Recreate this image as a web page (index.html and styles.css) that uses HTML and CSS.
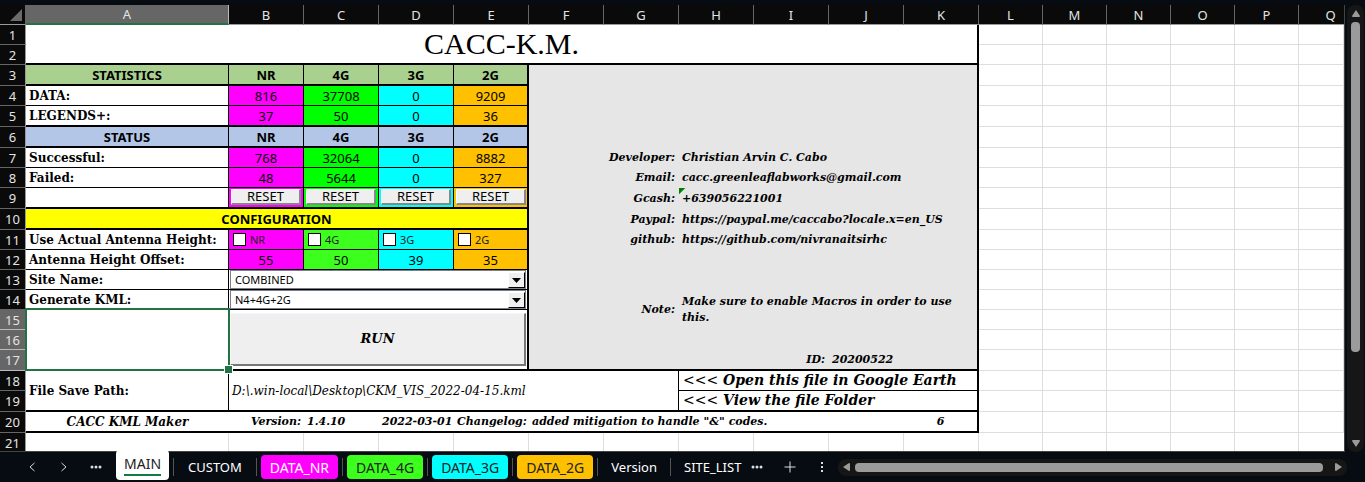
FILE: index.html
```html
<!DOCTYPE html>
<html lang="en">
<head>
<meta charset="utf-8">
<title>CACC KML Maker</title>
<link rel="stylesheet" href="styles.css">
</head>
<body>
<main class="workspace">
<div class="sheet">
<table class="grid">
<colgroup><col class="c-num"><col class="c-a"><col class="c-mid" span="10"><col class="c-std" span="5"><col></colgroup>
<thead>
<tr><th class="corner"><svg width="12" height="12" viewBox="0 0 12 12"><path d="M12 0V12H0Z" fill="#6b6b6b"/></svg></th><th class="active">A</th><th>B</th><th>C</th><th>D</th><th>E</th><th>F</th><th>G</th><th>H</th><th>I</th><th>J</th><th>K</th><th>L</th><th>M</th><th>N</th><th>O</th><th>P</th><th class="cut">Q</th></tr>
</thead>
<tbody>
<tr><th>1</th><td colspan="11" rowspan="2" class="title hb hr">CACC-K.M.</td><td><td><td><td><td><td></tr>
<tr><th>2</th><td><td><td><td><td><td></tr>
<tr class="tall head green"><th>3</th><td class="tr hb">STATISTICS</td><td class="tr hb">NR</td><td class="tr hb">4G</td><td class="tr hb">3G</td><td class="hr hb">2G</td><td colspan="6" rowspan="4" class="panel hr"></td><td><td><td><td><td><td></tr>
<tr class="nums"><th>4</th><td class="name tr tb">DATA:</td><td class="nr tr tb">816</td><td class="g4 tr tb">37708</td><td class="g3 tr tb">0</td><td class="g2 hr tb">9209</td><td><td><td><td><td><td></tr>
<tr class="tall nums"><th>5</th><td class="name tr hb">LEGENDS+:</td><td class="nr tr hb">37</td><td class="g4 tr hb">50</td><td class="g3 tr hb">0</td><td class="g2 hr hb">36</td><td><td><td><td><td><td></tr>
<tr class="tall head blue"><th>6</th><td class="tr hb">STATUS</td><td class="tr hb">NR</td><td class="tr hb">4G</td><td class="tr hb">3G</td><td class="hr hb">2G</td><td><td><td><td><td><td></tr>
<tr class="nums"><th>7</th><td class="name tr tb">Successful:</td><td class="nr tr tb">768</td><td class="g4 tr tb">32064</td><td class="g3 tr tb">0</td><td class="g2 hr tb">8882</td><td colspan="2" class="panel label">Developer:</td><td colspan="4" class="panel value hr">Christian Arvin C. Cabo</td><td><td><td><td><td><td></tr>
<tr class="nums"><th>8</th><td class="name tr tb">Failed:</td><td class="nr tr tb">48</td><td class="g4 tr tb">5644</td><td class="g3 tr tb">0</td><td class="g2 hr tb">327</td><td colspan="2" class="panel label">Email:</td><td colspan="4" class="panel value hr">cacc.greenleaflabworks@gmail.com</td><td><td><td><td><td><td></tr>
<tr class="tall"><th>9</th><td class="name tr hb"></td><td class="nr tr hb"><button class="reset">RESET</button></td><td class="g4 tr hb"><button class="reset">RESET</button></td><td class="g3 tr hb"><button class="reset">RESET</button></td><td class="g2 hr hb"><button class="reset">RESET</button></td><td colspan="2" class="panel label">Gcash:</td><td colspan="4" class="panel value flagged hr">+639056221001</td><td><td><td><td><td><td></tr>
<tr class="tall head yellow"><th>10</th><td colspan="5" class="hr hb">CONFIGURATION</td><td colspan="2" class="panel label">Paypal:</td><td colspan="4" class="panel value hr">https://paypal.me/caccabo?locale.x=en_US</td><td><td><td><td><td><td></tr>
<tr><th>11</th><td class="name tr tb">Use Actual Antenna Height:</td><td class="nr tr tb"><label class="check"><input type="checkbox">NR</label></td><td class="g4b tr tb"><label class="check"><input type="checkbox">4G</label></td><td class="g3 tr tb"><label class="check"><input type="checkbox">3G</label></td><td class="g2 hr tb"><label class="check"><input type="checkbox">2G</label></td><td colspan="2" class="panel label">github:</td><td colspan="4" class="panel value hr">https://github.com/nivranaitsirhc</td><td><td><td><td><td><td></tr>
<tr class="nums"><th>12</th><td class="name tr tb">Antenna Height Offset:</td><td class="nr tr tb">55</td><td class="g4b tr tb">50</td><td class="g3 tr tb">39</td><td class="g2 hr tb">35</td><td colspan="6" rowspan="2" class="panel hr"></td><td><td><td><td><td><td></tr>
<tr><th>13</th><td class="name tr tb"><label for="site">Site Name:</label></td><td colspan="4" class="hr tb"><div class="combo"><select id="site"><option>COMBINED</option></select><span class="drop"><svg width="9" height="5" viewBox="0 0 9 5"><path d="M0 0H9L4.500 5Z"/></svg></span></div></td><td><td><td><td><td><td></tr>
<tr><th>14</th><td class="name tr tb"><label for="kml">Generate KML:</label></td><td colspan="4" class="hr tb"><div class="combo"><select id="kml"><option>N4+4G+2G</option></select><span class="drop"><svg width="9" height="5" viewBox="0 0 9 5"><path d="M0 0H9L4.500 5Z"/></svg></span></div></td><td colspan="2" rowspan="2" class="panel label note">Note:</td><td colspan="4" rowspan="2" class="panel value note hr">Make sure to enable Macros in order to use this.</td><td><td><td><td><td><td></tr>
<tr class="picked"><th>15</th><td rowspan="3" class="selected tr hb"></td><td colspan="4" rowspan="3" class="hr hb"><button class="run">RUN</button></td><td><td><td><td><td><td></tr>
<tr class="picked"><th>16</th><td colspan="6" class="panel hr"></td><td><td><td><td><td><td></tr>
<tr class="tall picked"><th>17</th><td colspan="4" class="panel label id hb">ID:</td><td colspan="2" class="panel value id hr hb">20200522</td><td><td><td><td><td><td></tr>
<tr><th>18</th><td rowspan="2" class="name tr hb">File Save Path:</td><td colspan="6" rowspan="2" class="path tr hb">D:\.win-local\Desktop\CKM_VIS_2022-04-15.kml</td><td colspan="4" class="open hr tb"><a href="#earth"><span>&lt;&lt;&lt;</span> Open this file in Google Earth</a></td><td><td><td><td><td><td></tr>
<tr class="tall"><th>19</th><td colspan="4" class="open hr hb"><a href="#folder"><span>&lt;&lt;&lt;</span> View the file Folder</a></td><td><td><td><td><td><td></tr>
<tr class="tall foot"><th>20</th><td class="maker hb">CACC KML Maker</td><td class="right hb">Version:</td><td class="hb">1.4.10</td><td class="right hb">2022-03-01</td><td class="right hb">Changelog:</td><td colspan="5" class="hb">added mitigation to handle "&amp;" codes.</td><td class="mid hr hb">6</td><td><td><td><td><td><td></tr>
<tr><th>21</th><td><td><td><td><td><td><td><td><td><td><td><td><td><td><td><td></tr>
</tbody>
</table>
</div>
<div class="vbar"><svg width="10" height="7" viewBox="0 0 10 7"><path d="M5 0L9 6Q9 7 8 7H2Q1 7 1 6Z"/></svg><div class="vtrack"><div class="vthumb"></div></div><svg width="10" height="7" viewBox="0 0 10 7"><path d="M5 7L9 1Q9 0 8 0H2Q1 0 1 1Z"/></svg></div>
</main>
<nav class="tabs">
<div class="steps">
<button aria-label="Previous sheet"><svg width="8" height="10" viewBox="0 0 8 10"><path d="M6.500 1L2 5L6.500 9"/></svg></button>
<button aria-label="Next sheet"><svg width="8" height="10" viewBox="0 0 8 10"><path d="M1.500 1L6 5L1.500 9"/></svg></button>
<button aria-label="All sheets"><svg class="dots" width="12" height="4" viewBox="0 0 12 4"><circle cx="2" cy="2" r="1.500"/><circle cx="6" cy="2" r="1.500"/><circle cx="10" cy="2" r="1.500"/></svg></button>
</div>
<a class="tab main" href="#main"><span>MAIN</span></a><i></i>
<a class="tab plain" href="#custom">CUSTOM</a><i></i>
<a class="tab data t-nr" href="#nr">DATA_NR</a><i></i>
<a class="tab data t-4g" href="#4g">DATA_4G</a><i></i>
<a class="tab data t-3g" href="#3g">DATA_3G</a><i></i>
<a class="tab data t-2g" href="#2g">DATA_2G</a><i></i>
<a class="tab version" href="#version">Version</a><i></i>
<a class="tab sites" href="#sites">SITE_LIST</a>
<div class="extras">
<button aria-label="More sheets"><svg class="dots" width="12" height="4" viewBox="0 0 12 4"><circle cx="2" cy="2" r="1.500"/><circle cx="6" cy="2" r="1.500"/><circle cx="10" cy="2" r="1.500"/></svg></button>
<button aria-label="New sheet"><svg width="12" height="12" viewBox="0 0 12 12"><path d="M6 .5V11.500M.5 6H11.500"/></svg></button>
<button aria-label="Options"><svg class="dots" width="4" height="12" viewBox="0 0 4 12"><path d="M1 1H3V3H1ZM1 5H3V7H1ZM1 9H3V11H1Z"/></svg></button>
</div>
<div class="hbar"><svg width="7" height="10" viewBox="0 0 7 10"><path d="M0 5L6 1Q7 1 7 2V8Q7 9 6 9Z"/></svg><div class="hthumb"></div><svg width="7" height="10" viewBox="0 0 7 10"><path d="M7 5L1 1Q0 1 0 2V8Q0 9 1 9Z"/></svg></div>
</nav>
</body>
</html>
```
FILE: styles.css
```css
* { box-sizing: border-box; }
body {
  margin: 0;
  height: 100vh;
  display: flex;
  flex-direction: column;
  padding-top: 5px;
  background: #070c13;
  color: #000;
  font: 13px/18px "Noto Sans", sans-serif;
  overflow: hidden;
}
button, select, input { font: inherit; margin: 0; padding: 0; }
a { color: inherit; text-decoration: none; }

.workspace { flex: 1; min-height: 0; display: flex; gap: 2px; }
.sheet {
  flex: 1;
  min-width: 0;
  overflow: hidden;
  background: #fff;
  border-right: 1px solid #444;
  border-bottom: 1px solid #444;
}

/* Grid */
.grid { width: 100%; table-layout: fixed; border-collapse: separate; border-spacing: 0; }
.c-num { width: 26px; }
.c-a { width: 203px; }
.c-mid { width: 75px; }
.c-std { width: 64px; }
.grid tr { height: 20px; }
.grid tr.tall { height: 21px; }
.grid td, .grid th { padding: 0; white-space: nowrap; }
.grid td { border-right: 1px solid #dedede; border-bottom: 1px solid #dedede; }
.grid th { background: #0a0a0a; color: #e4e4e4; font-weight: 400; line-height: 18px; }
thead th {
  border-bottom: 1px solid #9a9a9a;
  border-right: 1px solid #666;
}
.grid thead .active { background: #666; border-bottom: 2px solid #217346; border-right-color: #bbb; line-height: 17px; }
.grid thead .corner { text-align: right; line-height: 12px; padding-right: 3px; }
thead .corner svg { display: inline-block; vertical-align: middle; }
.grid thead .cut { padding-left: 18px; border-right: 0; }
tbody th { border-bottom: 1px solid #666; border-right: 1px solid #9a9a9a; }
.grid .picked th { background: #666; border-bottom-color: #bbb; }

.grid .tb { border-bottom: 1px solid #000; }
.grid .hb { border-bottom: 2px solid #000; }
.grid .hr { border-right: 2px solid #000; }
.grid .tr { border-right: 1px solid #000; }
.grid td:not(.tb):not(.hb).panel { border-bottom: 0; }
.grid .panel:not(.hr) { border-right: 0; }

.title { text-align: center; font: 30px/36px "Liberation Serif", serif; }
.head td:not(.panel):not(.label):not(.value) { text-align: center; font-weight: 700; }
.green td.tr, .green td.hb { background: #a9d08e; }
.blue td.tr, .blue td.hb { background: #b4c6e7; }
.yellow td.hb { background: #ff0; }
.nums td { text-align: center; }
.nr { background: #f0f; }
.g4 { background: #0f0; }
.g4b { background: #3cff1e; }
.g3 { background: #0ff; }
.g2 { background: #ffc000; }

.grid .name { text-align: left; padding-left: 3px; font: bold 12px/16px "DejaVu Serif", serif; }
.grid .panel { background: #e6e6e6; font: italic bold 11px/16px "DejaVu Serif", serif; }
.grid .label { text-align: right; padding-right: 4px; }
.grid .value { text-align: left; padding-left: 3px; }
.grid .value.note { white-space: normal; padding-right: 16px; }
.grid .flagged { background: linear-gradient(135deg, #008000 4px, transparent 5px) #e6e6e6; }
.path { font: italic 12px/16px "DejaVu Serif", serif; }
.grid .path { padding-left: 3px; }
.open { font: italic bold 14px/17px "DejaVu Serif", serif; }
.grid .open { padding-left: 4px; }
.open span { font-weight: 400; }
.foot td { font: italic bold 11px/16px "DejaVu Serif", serif; }
.grid .foot .hb:not(.hr) { border-right: 0; }
.grid .foot td { padding: 0 3px; }
.foot .maker, .foot .mid { text-align: center; }
.foot .maker { font-size: 12px; }
.foot .right { text-align: right; }

.selected { position: relative; }
.selected::before {
  content: "";
  position: absolute;
  inset: -2px -2px -2px -1px;
  border: 2px solid #217346;
}
.selected::after {
  content: "";
  position: absolute;
  right: -5px;
  bottom: -5px;
  width: 7px;
  height: 7px;
  background: #217346;
  border: 1px solid #fff;
}

/* Sheet controls */
.reset {
  display: block;
  width: 70px;
  height: 16px;
  margin: 0 2px 2px;
  background: #efefef;
  border: 1px solid #fff;
  border-right: 2px solid #888;
  border-bottom: 2px solid #888;
  line-height: 13px;
}
.check { display: flex; align-items: center; gap: 4px; padding-left: 4px; font-size: 11px; line-height: 18px; color: #222; }
.check input { appearance: none; width: 13px; height: 13px; background: #fff; border: 1px solid #000; }
.combo { position: relative; margin: 0 1px; height: 19px; }
.combo select {
  appearance: none;
  display: block;
  width: 100%;
  height: 19px;
  padding-left: 4px;
  background: #fff;
  border: 1px solid #7a7f8c;
  border-radius: 0;
  color: #000;
  font-size: 11px;
}
.drop {
  position: absolute;
  top: 2px;
  right: 1px;
  width: 17px;
  height: 16px;
  display: grid;
  place-items: center;
  background: #efefef;
  border: 1px solid #fff;
  border-right: 1px solid #000;
  border-bottom: 1px solid #000;
  pointer-events: none;
}
.run {
  display: block;
  width: calc(100% - 2px);
  height: 53px;
  margin: 0 1px;
  background: #efefef;
  border: 1px solid #f6f6f6;
  border-right: 2px solid #777;
  border-bottom: 2px solid #777;
  font: italic bold 13px/16px "DejaVu Serif", serif;
}

/* Scroll bars */
.vbar {
  width: 17px;
  margin: 0 1px 0 0;
  padding: 5px 0;
  display: flex;
  flex-direction: column;
  align-items: center;
  gap: 5px;
  background: #161616;
  border-radius: 8px;
  fill: #9b9b9b;
}
.vbar svg { flex: none; }
.vtrack { flex: 1; }
.vthumb { width: 9px; height: 80%; background: #9b9b9b; border-radius: 4px; }
.hbar {
  flex: 1;
  height: 17px;
  margin-right: 18px;
  padding: 0 5px;
  display: flex;
  align-items: center;
  background: #161616;
  border-radius: 8px;
  fill: #9b9b9b;
}
.hthumb { flex: 1; height: 9px; margin: 0 12px 0 5px; background: #9b9b9b; border-radius: 4px; }

/* Tab bar */
.tabs { height: 30px; flex: none; display: flex; align-items: center; color: #fff; }
.tabs button { border: 0; background: none; display: grid; place-items: center; stroke: #ddd; fill: none; }
.tabs .dots { stroke: none; fill: #ddd; }
.steps { width: 116px; padding: 0 10px 0 22px; display: flex; justify-content: space-between; }
.steps button { width: 20px; height: 20px; }
.tab { height: 24px; padding: 0 9px; border-radius: 4px; line-height: 25px; white-space: nowrap; }
.tabs i { width: 1px; height: 18px; margin: 0 4px; background: #555; }
.main {
  height: 30px;
  margin-top: -4px;
  padding: 1px 8px 0;
  background: #fff;
  color: #222;
  font-size: 14px;
  z-index: 1;
}
.main span { display: block; height: 25px; border-bottom: 2px solid #107c41; }
.plain { padding: 0 10px; }
.data { font-size: 14px; }
.t-nr { background: #f0f; }
.t-4g { background: #3cff1e; color: #222; }
.t-3g { background: #0ff; color: #222; }
.t-2g { background: #ffc000; color: #222; }
.sites { padding-right: 0; }
.extras { width: 97px; padding: 0 6px; display: flex; justify-content: space-between; }
.extras button { width: 20px; height: 20px; }
```
